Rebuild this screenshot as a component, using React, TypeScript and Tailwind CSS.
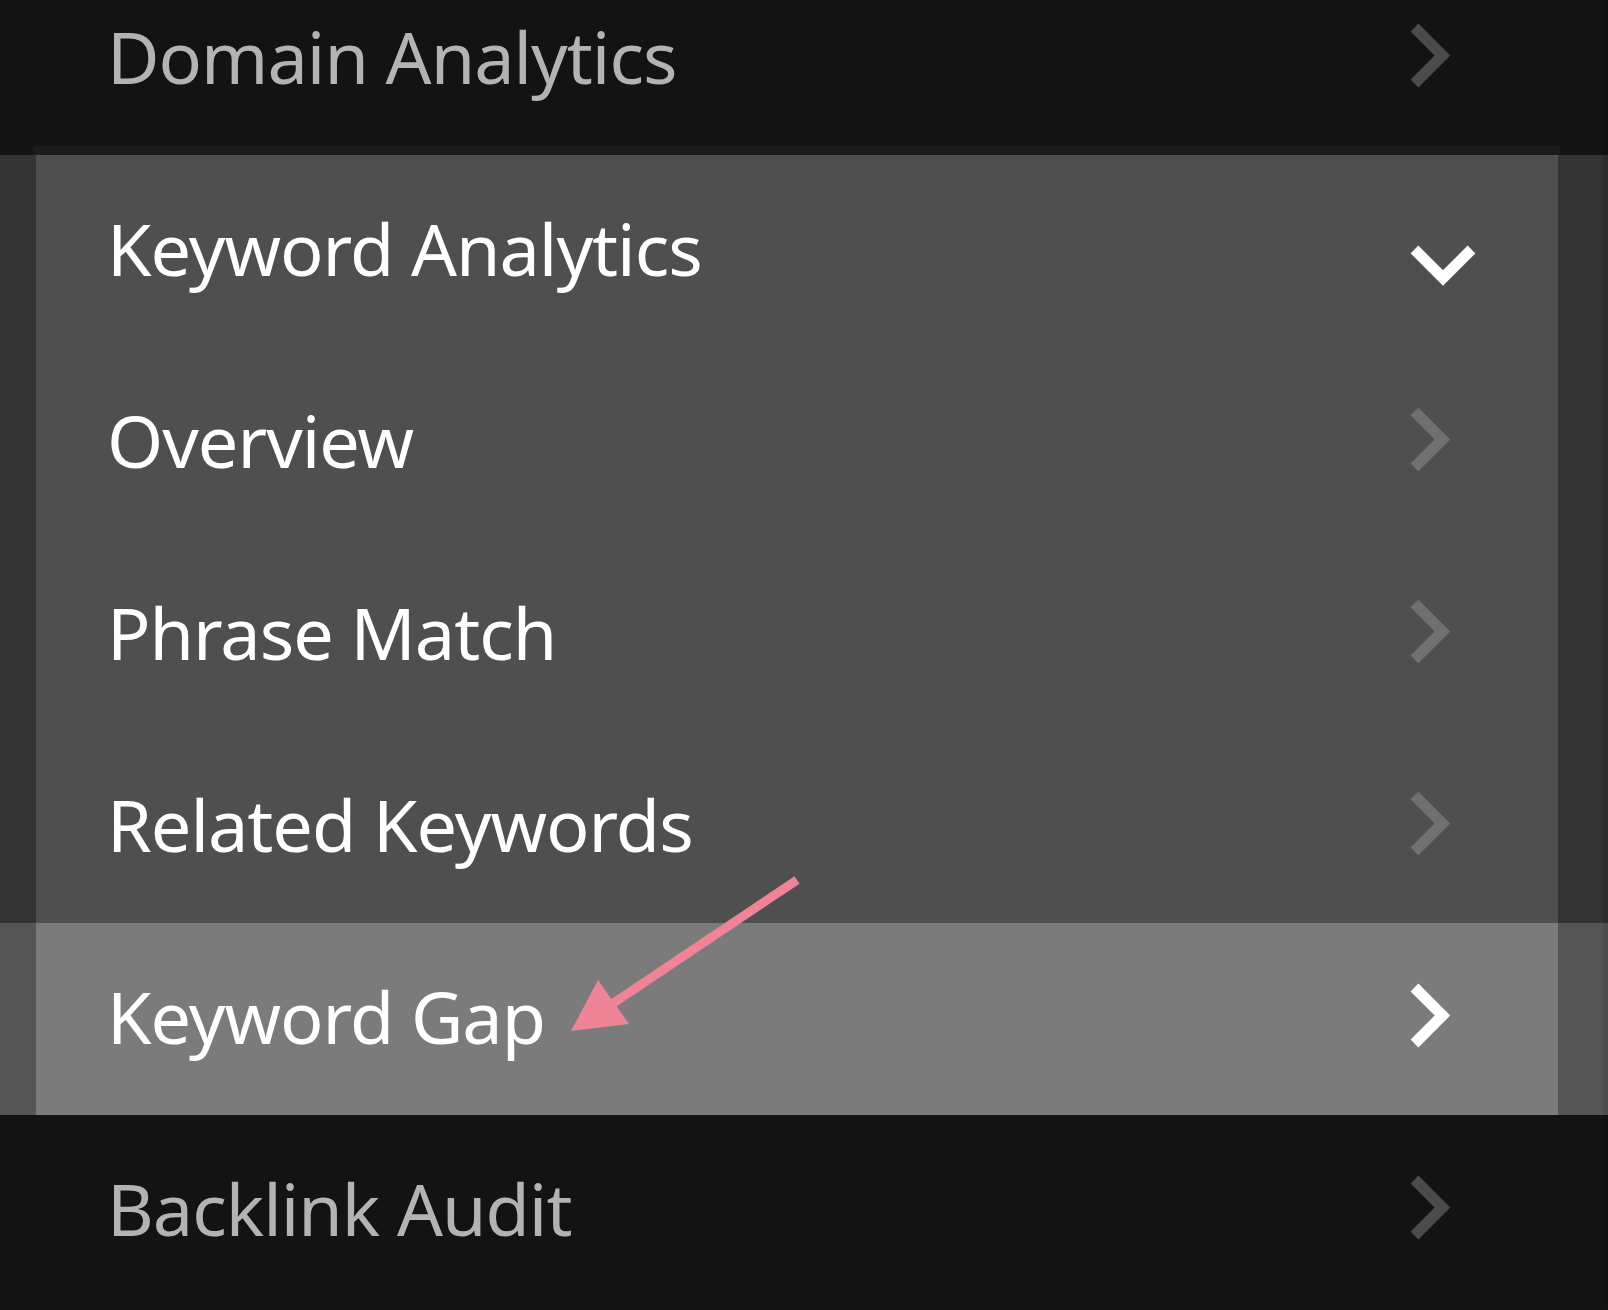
import React from "react";

type Kind = "dark" | "panel" | "active";

function ChevronRight({ color }: { color: string }) {
  return (
    <svg width="80" height="80" viewBox="0 0 80 80" className="shrink-0">
      <polyline
        points="14.5,8.5 42.5,36.5 14.5,64.5"
        fill="none"
        stroke={color}
        strokeWidth="11"
        strokeLinejoin="miter"
        strokeLinecap="butt"
      />
    </svg>
  );
}

function ChevronDown({ color }: { color: string }) {
  return (
    <svg width="80" height="80" viewBox="0 0 80 80" className="shrink-0">
      <polyline
        points="14.5,38.5 43,67 71.5,38.5"
        fill="none"
        stroke={color}
        strokeWidth="11"
        strokeLinejoin="miter"
        strokeLinecap="butt"
      />
    </svg>
  );
}

function Row({
  label,
  kind,
  down,
}: {
  label: string;
  kind: Kind;
  down?: boolean;
}) {
  const outer =
    kind === "dark" ? "bg-[#131313]" : kind === "active" ? "bg-[#555555]" : "bg-[#333333]";
  const inner =
    kind === "dark" ? "bg-[#131313]" : kind === "active" ? "bg-[#7b7b7b]" : "bg-[#4f4f4f]";
  const text = kind === "dark" ? "text-[#b3b3b3]" : "text-white";
  const chevron =
    kind === "dark" ? "#4b4b4b" : kind === "active" ? "#ffffff" : "#707070";
  return (
    <div className={`flex h-[192px] w-full ${outer}`}>
      <div className="w-[36px] shrink-0" />
      <div className={`flex flex-1 items-center ${inner}`}>
        <span
          className={`pl-[71px] text-[72px] leading-none tracking-[-1px] ${text} pb-[7px]`}
          style={{ fontFamily: '"Noto Sans", "Open Sans", sans-serif' }}
        >
          {label}
        </span>
        <div className="ml-auto mr-[78px] flex items-center">
          {down ? <ChevronDown color="#ffffff" /> : <ChevronRight color={chevron} />}
        </div>
      </div>
      <div className="w-[45px] shrink-0" />
      <div className="w-[5px] shrink-0 bg-black/10" />
    </div>
  );
}

export default function App() {
  return (
    <div className="relative h-[1310px] w-full overflow-hidden bg-[#131313]">
      <div className="mt-[-37px] flex flex-col">
        <Row label="Domain Analytics" kind="dark" />
        <div className="relative flex flex-col">
          <div className="absolute left-[33px] right-[48px] top-[-9px] h-[9px] bg-[#1b1b1b]" />
          <Row label="Keyword Analytics" kind="panel" down />
          <Row label="Overview" kind="panel" />
          <Row label="Phrase Match" kind="panel" />
          <Row label="Related Keywords" kind="panel" />
          <Row label="Keyword Gap" kind="active" />
        </div>
        <Row label="Backlink Audit" kind="dark" />
      </div>
      <svg
        className="pointer-events-none absolute left-0 top-0"
        width="1608"
        height="1310"
        viewBox="0 0 1608 1310"
      >
        <line x1="797" y1="880" x2="603" y2="1010" stroke="#ef8497" strokeWidth="9" />
        <polygon points="571,1031 598,980 629,1024" fill="#ef8497" />
      </svg>
    </div>
  );
}
